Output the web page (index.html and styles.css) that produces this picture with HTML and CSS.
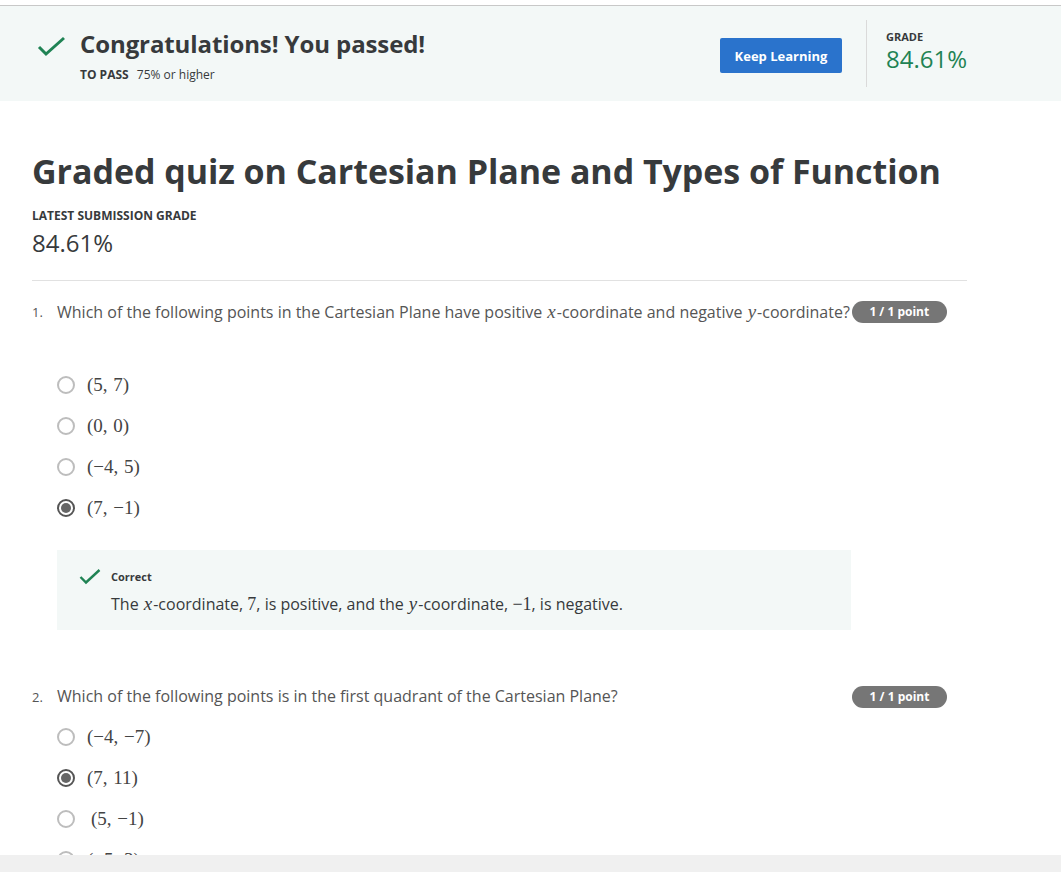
FILE: index.html
```html
<!DOCTYPE html>
<html lang="en">
<head>
<meta charset="utf-8">
<title>Graded quiz</title>
<link rel="stylesheet" href="styles.css">
</head>
<body>
<div class="topline"></div>
<header class="banner">
  <div class="banner-left">
    <svg class="check-lg" width="30" height="22" viewBox="0 0 30 22"><path d="M2 11 L9 18 L27 2" fill="none" stroke="#1f8354" stroke-width="3"/></svg>
    <div class="banner-text">
      <h2 class="congrats">Congratulations! You passed!</h2>
      <div class="topass"><b>TO PASS</b> 75% or higher</div>
    </div>
  </div>
  <button class="keep">Keep Learning</button>
  <div class="divider"></div>
  <div class="grade-box">
    <div class="grade-label">GRADE</div>
    <div class="grade-val">84.61%</div>
  </div>
</header>

<main class="content">
  <h1 class="title">Graded quiz on Cartesian Plane and Types of Function</h1>
  <div class="latest-label">LATEST SUBMISSION GRADE</div>
  <div class="latest-val">84.61%</div>
  <hr class="rule">

  <section class="question q1">
    <div class="q-head">
      <span class="q-num">1.</span>
      <span class="q-text">Which of the following points in the Cartesian Plane have positive <i class="mi">x</i>-coordinate and negative <i class="mi">y</i>-coordinate?</span>
      <span class="badge">1 / 1 point</span>
    </div>
    <ul class="options first">
      <li><span class="radio"></span><span class="math">(5, 7)</span></li>
      <li><span class="radio"></span><span class="math">(0, 0)</span></li>
      <li><span class="radio"></span><span class="math">(−4, 5)</span></li>
      <li><span class="radio on"></span><span class="math">(7, −1)</span></li>
    </ul>
    <div class="feedback">
      <svg class="check-sm" width="22" height="16" viewBox="0 0 22 16"><path d="M1.5 8 L7 13.5 L20.5 1" fill="none" stroke="#1f8354" stroke-width="2.4"/></svg>
      <div>
        <div class="fb-label">Correct</div>
        <div class="fb-text">The <i class="mi">x</i>-coordinate, <span class="mn">7</span>, is positive, and the <i class="mi">y</i>-coordinate, <span class="mn">−1</span>, is negative.</div>
      </div>
    </div>
  </section>

  <section class="question q2">
    <div class="q-head">
      <span class="q-num">2.</span>
      <span class="q-text">Which of the following points is in the first quadrant of the Cartesian Plane?</span>
      <span class="badge">1 / 1 point</span>
    </div>
    <ul class="options">
      <li><span class="radio"></span><span class="math">(−4, −7)</span></li>
      <li><span class="radio on"></span><span class="math">(7, 11)</span></li>
      <li><span class="radio"></span><span class="math pad">(5, −1)</span></li>
      <li><span class="radio"></span><span class="math">(−5, 3)</span></li>
    </ul>
  </section>
</main>
<div class="bottom-bar"></div>
</body>
</html>
```

FILE: styles.css
```css
* { box-sizing: border-box; }
html, body { margin: 0; padding: 0; }
body {
  font-family: "Open Sans", "Liberation Sans", sans-serif;
  color: #373a3c;
  background: #fff;
  width: 1061px;
  overflow: hidden;
  height: 872px;
}
.topline { height: 6px; border-bottom: 1px solid #c8c8c8; }
.banner {
  background: #f3f8f7;
  height: 95px;
  display: flex;
  align-items: flex-start;
  padding-left: 37px;
}
.banner-left { display: flex; align-items: flex-start; flex: 1; padding-top: 22px; }
.check-lg { margin-top: 8px; margin-right: 13px; }
.congrats { margin: 0; font-size: 24px; font-weight: 700; line-height: 32px; color: #373a3c; letter-spacing: -0.1px; }
.topass { font-size: 12px; line-height: 16px; margin-top: 7px; color: #373a3c; }
.topass b { margin-right: 5px; }
.keep {
  margin-top: 32px;
  width: 122px; height: 35px;
  background: #2a73cc;
  color: #fff;
  border: none; border-radius: 2px;
  font-family: "Open Sans", sans-serif;
  font-weight: 700; font-size: 13px;
  padding: 0;
}
.divider { width: 1px; height: 67px; background: #dadada; margin: 14px 19px 0 24px; }
.grade-box { width: 175px; padding-top: 23px; }
.grade-label { font-size: 11px; font-weight: 700; line-height: 16px; color: #373a3c; }
.grade-val { font-size: 24px; line-height: 28px; color: #1f8354; margin-top: 0; }

.content { padding: 0 94px 0 32px; }
.title { margin: 47px 0 0; font-size: 34px; line-height: 46px; font-weight: 700; color: #373a3c; letter-spacing: -0.05px; white-space: nowrap; }
.latest-label { font-size: 12px; font-weight: 700; line-height: 16px; margin-top: 14px; }
.latest-val { font-size: 24px; line-height: 28px; margin-top: 5px; }
.rule { border: 0; border-top: 1px solid #e1e1e1; margin: 23px 0 0; }

.q1 { margin-top: 19px; }
.q2 { margin-top: 55px; }
.q-head { display: flex; align-items: center; height: 23px; font-size: 16px; color: #555; padding-right: 20px; }
.q-num { font-size: 13px; width: 25px; color: #555; flex: none; }
.q-text { white-space: nowrap; line-height: 23px; }
.q-head .badge { margin-left: auto; }
.q1 .badge { margin-left: 2px; }
.badge {
  background: #767676; color: #fff;
  font-size: 12px; font-weight: 700;
  border-radius: 11px; height: 22px; line-height: 22px;
  width: 95px; text-align: center; flex: none;
}
.mi { font-family: "Liberation Serif", "DejaVu Serif", serif; font-style: italic; font-size: 19px; padding: 0 1px; }
.mn { font-family: "Liberation Serif", "DejaVu Serif", serif; font-size: 18px; }

.options { list-style: none; margin: 0; padding: 0 0 0 25px; }
.options.first { margin-top: 41px; }
.q2 .options { margin-top: 8px; }
.options li { display: flex; align-items: center; height: 41px; }
.radio {
  width: 18px; height: 18px; border-radius: 50%;
  border: 2px solid #bdbdbd; margin-right: 12px; flex: none;
  display: flex; align-items: center; justify-content: center;
}
.radio.on { border-color: #555; }
.radio.on::after { content: ""; width: 10px; height: 10px; border-radius: 50%; background: #666; }
.math { font-family: "Liberation Serif", "DejaVu Serif", serif; font-size: 19px; color: #444; word-spacing: 1px; }
.math.pad { padding-left: 4px; }

.feedback {
  margin: 22px 0 0 25px;
  width: 794px; height: 80px;
  background: #f3f8f7;
  display: flex; align-items: flex-start;
  padding: 19px 0 0 22px;
}
.check-sm { margin-right: 10px; }
.fb-label { font-size: 11px; font-weight: 700; line-height: 16px; color: #373a3c; }
.fb-text { font-size: 16px; line-height: 22px; margin-top: 8px; color: #373a3c; }

.bottom-bar { position: fixed; left: 0; right: 0; bottom: 0; height: 17px; background: #f0f0f0; }
```
